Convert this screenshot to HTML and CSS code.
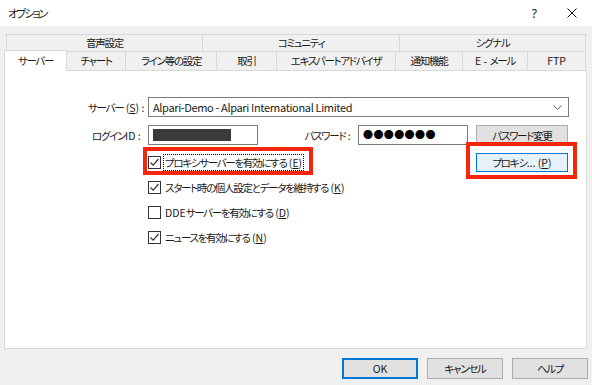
FILE: index.html
```html
<!DOCTYPE html>
<html lang="ja">
<head>
    <meta charset="UTF-8">
    <title>オプション</title>
    <link rel="stylesheet" href="styles.css">
</head>
<body>
    <div class="titlebar">
        <span class="title">オプション</span>
        <div class="caption-buttons">
            <span class="help">?</span>
            <svg class="close" width="10" height="10" viewBox="0 0 10 10">
                <path d="M0.5 0.5 L9.5 9.5 M9.5 0.5 L0.5 9.5" stroke="#111" stroke-width="1" fill="none"/>
            </svg>
        </div>
    </div>

    <div class="dialog">
        <!-- tab strip, two rows -->
        <div class="tab-row row-top">
            <div class="tab tab-sound">音声設定</div>
            <div class="tab tab-community">コミュニティ</div>
            <div class="tab tab-signal last">シグナル</div>
        </div>
        <div class="tab-row row-bottom">
            <div class="tab tab-server active">サーバー</div>
            <div class="tab tab-chart">チャート</div>
            <div class="tab tab-lines">ライン等の設定</div>
            <div class="tab tab-trade">取引</div>
            <div class="tab tab-expert">エキスパートアドバイザ</div>
            <div class="tab tab-notify">通知機能</div>
            <div class="tab tab-mail"><span class="key">E - </span>メール</div>
            <div class="tab tab-ftp last"><span class="key">FTP</span></div>
        </div>

        <div class="panel">
            <div class="form-row">
                <label class="field-label">サーバー<span class="key"> (<u>S</u>) </span>:</label>
                <div class="combo">
                    <span class="combo-text">Alpari-Demo - Alpari International Limited</span>
                    <svg class="chevron" width="9" height="5" viewBox="0 0 9 5">
                        <path d="M0.5 0.5 L4.5 4.5 L8.5 0.5" stroke="#606060" stroke-width="1" fill="none"/>
                    </svg>
                </div>
            </div>

            <div class="form-row login-row">
                <label class="field-label">ログイン<span class="key">ID : </span></label>
                <div class="textbox"><span class="redact"></span></div>
                <label class="field-label pass-label">パスワード<span class="key"> : </span></label>
                <div class="textbox password">●●●●●●●</div>
                <button class="btn side-btn">パスワード変更</button>
            </div>

            <div class="checks">
                <div class="check-row">
                    <label class="check">
                        <span class="box">
                            <svg width="11" height="11" viewBox="0 0 11 11"><path d="M1.5 5.5 L4.2 8.2 L9.5 2" stroke="#333" stroke-width="1.2" fill="none"/></svg>
                        </span>
                        <span class="check-text focused">プロキシサーバーを有効にする<span class="key"> (<u>E</u>)</span></span>
                    </label>
                    <button class="btn side-btn proxy-btn">プロキシ<span class="key">... (<u>P</u>)</span></button>
                </div>
                <div class="check-row">
                    <label class="check">
                        <span class="box">
                            <svg width="11" height="11" viewBox="0 0 11 11"><path d="M1.5 5.5 L4.2 8.2 L9.5 2" stroke="#333" stroke-width="1.2" fill="none"/></svg>
                        </span>
                        <span class="check-text">スタート時の個人設定とデータを維持する<span class="key"> (<u>K</u>)</span></span>
                    </label>
                </div>
                <div class="check-row">
                    <label class="check">
                        <span class="box"></span>
                        <span class="check-text"><span class="key">DDE</span>サーバーを有効にする<span class="key"> (<u>D</u>)</span></span>
                    </label>
                </div>
                <div class="check-row">
                    <label class="check">
                        <span class="box">
                            <svg width="11" height="11" viewBox="0 0 11 11"><path d="M1.5 5.5 L4.2 8.2 L9.5 2" stroke="#333" stroke-width="1.2" fill="none"/></svg>
                        </span>
                        <span class="check-text">ニュースを有効にする<span class="key"> (<u>N</u>)</span></span>
                    </label>
                </div>
            </div>

            <!-- red annotation frames -->
            <div class="mark mark-check"></div>
            <div class="mark mark-proxy"></div>
        </div>

        <div class="footer">
            <button class="btn footer-btn default"><span class="key">OK</span></button>
            <button class="btn footer-btn">キャンセル</button>
            <button class="btn footer-btn">ヘルプ</button>
        </div>
    </div>
</body>
</html>
```

FILE: styles.css
```css
* {
    margin: 0;
    padding: 0;
    box-sizing: border-box;
}

body {
    width: 592px;
    height: 385px;
    overflow: hidden;
    background: #f0f0f0;
    font-family: "Noto Sans CJK JP", "Noto Sans", sans-serif;
    font-feature-settings: "palt";
    font-size: 10.5px;
    letter-spacing: -1.3px;
    color: #1a1a1a;
}

/* latin bits (mnemonics, ids) keep normal spacing */
.key {
    letter-spacing: 0;
    white-space: pre;
}

u {
    text-decoration: underline;
    text-underline-offset: 1px;
}

.titlebar {
    height: 26px;
    background: #fff;
    display: flex;
    align-items: center;
    justify-content: space-between;
    padding: 0 15px 0 8px;
}

.title {
    font-size: 11px;
    letter-spacing: -2px;
}

.caption-buttons {
    display: flex;
    align-items: center;
    gap: 30px;
}

.help {
    font-family: "Noto Sans", sans-serif;
    font-size: 12px;
    letter-spacing: 0;
}

.dialog {
    padding-top: 8px;
}

/* tabs */
.tab-row {
    display: flex;
    align-items: flex-start;
}

.row-top {
    margin-left: 6px;
    height: 17px;
}

.row-bottom {
    margin-left: 4px;
    height: 19px;
}

.tab {
    height: 100%;
    display: flex;
    align-items: center;
    justify-content: center;
    border-top: 1px solid #d9d9d9;
    border-left: 1px solid #d9d9d9;
    background: #f0f0f0;
    white-space: nowrap;
    line-height: 1;
}

.tab.last {
    border-right: 1px solid #d9d9d9;
}

.row-bottom .tab.tab-chart {
    border-left: none;
}

.tab.active {
    position: relative;
    z-index: 1;
    height: 21px;
    margin-top: -1px;
    background: #fff;
    border-right: 1px solid #d9d9d9;
}

.tab-sound { width: 196px; }
.tab-community { width: 197px; }
.tab-signal { width: 187px; }

.tab-server { width: 63px; }
.tab-chart { width: 58px; }
.tab-lines { width: 91px; }
.tab-trade { width: 60px; }
.tab-expert { width: 119px; }
.tab-notify { width: 67px; }
.tab-mail { width: 65px; }
.tab-ftp { width: 59px; }

/* page body */
.panel {
    position: relative;
    margin-left: 4px;
    width: 583px;
    height: 279px;
    background: #fff;
    border: 1px solid #d9d9d9;
    padding-top: 26px;
}

.form-row {
    display: flex;
    align-items: center;
    height: 20px;
}

.login-row {
    margin-top: 8px;
}

.field-label {
    width: 138px;
    margin-right: 5px;
    text-align: right;
    white-space: nowrap;
}

.pass-label {
    width: 95px;
}

.combo {
    width: 421px;
    height: 20px;
    border: 1px solid #7a7a7a;
    display: flex;
    align-items: center;
    justify-content: space-between;
    padding: 0 6px 0 4px;
}

.combo-text {
    font-size: 11px;
    letter-spacing: -0.35px;
}

.textbox {
    width: 110px;
    height: 20px;
    border: 1px solid #7a7a7a;
    display: flex;
    align-items: center;
    padding-left: 4px;
}

.redact {
    width: 78px;
    height: 12px;
    background: #3a3a3a;
}

.password {
    font-size: 10px;
    letter-spacing: 0.4px;
    line-height: 1;
    color: #000;
}

.btn {
    font-family: inherit;
    font-feature-settings: "palt";
    font-size: 10.5px;
    letter-spacing: -1.3px;
    color: #1a1a1a;
    background: #e1e1e1;
    border: 1px solid #adadad;
    display: flex;
    align-items: center;
    justify-content: center;
}

.side-btn {
    width: 92px;
    height: 21px;
    margin-left: 8px;
}

.proxy-btn {
    height: 19px;
    margin-left: auto;
    margin-right: 18px;
    background: #e5f1fb;
    border-color: #0078d7;
}

/* check boxes */
.checks {
    margin-top: 5px;
}

.check-row {
    display: flex;
    align-items: center;
    height: 25px;
    padding-left: 143px;
}

.check {
    display: flex;
    align-items: center;
}

.box {
    width: 13px;
    height: 13px;
    border: 1px solid #333;
    background: #fff;
    display: flex;
    align-items: center;
    justify-content: center;
}

.check-text {
    margin-left: 2px;
    padding: 0 1px;
    border: 1px dotted transparent;
    line-height: 15px;
    white-space: nowrap;
}

.check-text.focused {
    border-color: #000;
}

/* red annotation frames */
.mark {
    position: absolute;
    border: 4px solid #f5260a;
}

.mark-check {
    left: 138px;
    top: 76px;
    width: 170px;
    height: 28px;
}

.mark-proxy {
    left: 461px;
    top: 71px;
    width: 111px;
    height: 37px;
}

.footer {
    display: flex;
    justify-content: flex-end;
    gap: 9px;
    padding: 9px 4px 0 0;
}

.footer-btn {
    width: 76px;
    height: 21px;
}

.footer-btn.default {
    border-color: #0078d7;
    box-shadow: inset 0 0 0 1px #0078d7;
}
```
